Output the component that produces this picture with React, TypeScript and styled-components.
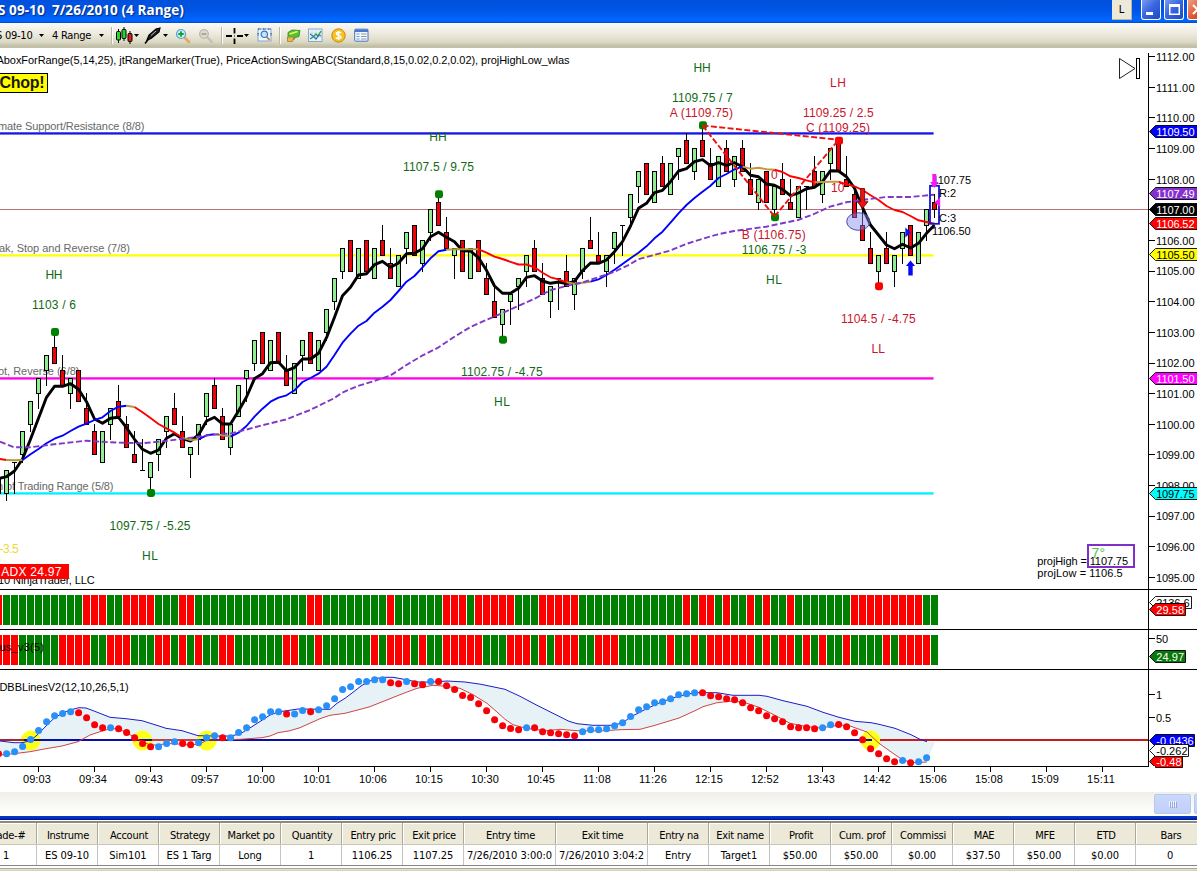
import React from 'react';
import styled, { createGlobalStyle } from 'styled-components';

const GlobalStyle = createGlobalStyle`
  html, body { margin: 0; padding: 0; background: #fff; overflow: hidden; }
  * { box-sizing: border-box; }
`;

const UI_FONT = '"DejaVu Sans Condensed", "Liberation Sans", sans-serif';
const CHART_FONT = '"Liberation Sans", Arial, sans-serif';

/* ---------- data ---------- */

type Kind = 'g' | 'r' | 'd';
type Candle = [number, number, number, number, Kind];

// high, low, body top, body bottom: quarter-point ticks above 1097.00
const candles: Candle[] = [
  [6, 3, 5, 3, 'r'], [6, 2, 6, 3, 'g'], [7, 3, 7, 7, 'd'], [11, 7, 11, 8, 'g'], [15, 11, 15, 12, 'g'],
  [18, 14, 18, 16, 'g'], [21, 17, 21, 19, 'g'], [24, 20, 22, 20, 'r'], [21, 17, 19, 17, 'r'], [18, 14, 18, 16, 'g'],
  [19, 15, 19, 15, 'r'], [16, 12, 14, 12, 'r'], [12, 8, 11, 8, 'r'], [11, 7, 11, 7, 'g'], [14, 10, 14, 12, 'g'],
  [17, 13, 15, 13, 'r'], [13, 9, 12, 9, 'r'], [11, 7, 8, 7, 'r'], [10, 6, 6, 6, 'd'], [7, 3, 7, 5, 'g'],
  [10, 6, 10, 8, 'g'], [13, 9, 13, 11, 'g'], [16, 12, 14, 12, 'r'], [13, 9, 11, 9, 'r'], [9, 5, 9, 8, 'g'],
  [12, 8, 12, 10, 'g'], [16, 12, 16, 13, 'g'], [18, 14, 17, 14, 'r'], [14, 10, 13, 10, 'r'], [12, 8, 12, 9, 'g'],
  [17, 13, 17, 13, 'g'], [19, 15, 19, 18, 'g'], [23, 19, 23, 20, 'g'], [24, 20, 24, 20, 'r'], [23, 19, 23, 19, 'g'],
  [24, 20, 24, 20, 'r'], [21, 17, 19, 17, 'r'], [20, 16, 20, 16, 'g'], [23, 19, 23, 21, 'g'], [24, 20, 24, 20, 'r'],
  [23, 19, 23, 19, 'g'], [27, 23, 27, 24, 'g'], [31, 27, 31, 28, 'g'], [35, 31, 35, 32, 'g'], [36, 32, 36, 32, 'r'],
  [35, 31, 35, 31, 'g'], [36, 32, 36, 32, 'r'], [35, 31, 35, 31, 'g'], [38, 34, 36, 34, 'r'], [35, 31, 33, 31, 'r'],
  [34, 30, 34, 30, 'g'], [37, 33, 37, 35, 'g'], [38, 34, 38, 34, 'r'], [36, 32, 36, 33, 'g'], [40, 36, 40, 37, 'g'],
  [42, 38, 41, 38, 'r'], [39, 35, 37, 35, 'r'], [35, 31, 35, 34, 'g'], [36, 32, 36, 32, 'r'], [35, 31, 35, 31, 'g'],
  [36, 32, 36, 32, 'r'], [33, 29, 31, 29, 'r'], [30, 26, 28, 26, 'r'], [27, 23, 27, 25, 'g'], [29, 25, 29, 28, 'g'],
  [31, 27, 31, 30, 'g'], [34, 30, 34, 32, 'g'], [36, 32, 35, 32, 'r'], [33, 29, 31, 29, 'r'], [30, 26, 30, 28, 'g'],
  [31, 27, 31, 31, 'd'], [34, 30, 32, 30, 'r'], [31, 27, 31, 29, 'g'], [35, 31, 35, 32, 'g'], [39, 35, 36, 35, 'r'],
  [37, 33, 34, 33, 'r'], [34, 30, 34, 32, 'g'], [37, 33, 37, 35, 'g'], [38, 34, 38, 38, 'd'], [42, 38, 42, 39, 'g'],
  [45, 41, 45, 43, 'g'], [46, 42, 46, 42, 'r'], [45, 41, 45, 41, 'g'], [47, 43, 46, 43, 'r'], [46, 42, 46, 42, 'g'],
  [48, 44, 48, 47, 'g'], [50, 46, 49, 46, 'r'], [48, 44, 48, 45, 'g'], [51, 47, 49, 47, 'r'], [48, 44, 46, 44, 'r'],
  [47, 43, 47, 43, 'g'], [49, 45, 48, 45, 'r'], [47, 43, 47, 44, 'g'], [49, 45, 48, 45, 'r'], [46, 42, 44, 42, 'r'],
  [44, 40, 44, 41, 'g'], [45, 41, 45, 41, 'r'], [43, 39, 43, 40, 'g'], [46, 42, 44, 42, 'r'], [44, 40, 41, 40, 'r'],
  [43, 39, 43, 39, 'g'], [43, 40, 43, 43, 'd'], [47, 43, 45, 43, 'r'], [45, 41, 45, 42, 'g'], [48, 44, 48, 46, 'g'],
  [49, 45, 49, 45, 'r'], [47, 43, 44, 43, 'r'], [43, 39, 42, 39, 'r'], [40, 36, 38, 36, 'r'], [37, 33, 35, 33, 'r'],
  [34, 30, 34, 32, 'g'], [37, 33, 35, 33, 'r'], [34, 30, 34, 32, 'g'], [37, 33, 37, 35, 'g'], [38, 34, 38, 34, 'r'],
  [37, 33, 37, 33, 'g'], [40, 36, 40, 38, 'g'], [42, 39, 41, 40, 'r'],
];

const fastAverage = [
  478.7, 476.7, 471, 459, 439.3, 418.3, 397.3, 386.3, 386.3, 383.7, 389.3, 401.7, 419, 423.3, 418.3, 417.3, 427.7,
  439.3, 449.3, 453.3, 450, 438.3, 433.7, 438.7, 441, 435, 421, 417.3, 424, 424, 411, 397, 378.6, 373.7, 362.7, 362.3,
  370.7, 367.6, 359, 359, 353.3, 337.7, 317.3, 295.7, 287.3, 275, 273.7, 264.7, 261.3, 267.3, 263, 253.7, 253.3, 248.7,
  236.7, 232.3, 237.3, 241.7, 250.7, 251, 257.7, 270.3, 286, 293.3, 293.3, 288.3, 277.3, 275.7, 281, 283.3, 282, 283.7,
  281.3, 270.7, 263, 263.3, 260, 251.7, 241.7, 226, 208.3, 203.3, 192.7, 190.3, 181.7, 171, 168.7, 161.7, 159.7, 165.7,
  162.7, 165.3, 162.7, 166.7, 175.3, 176.7, 184, 185.3, 189.3, 195.7, 193, 188.7, 187.3, 181.7, 170.7, 171, 176.7,
  188.3, 207.3, 225, 235, 245, 248.7, 244.3, 248, 243.3, 233.3, 225,
];

const slowAverage = [
  458.7, 460, 460.3, 460, 454.3, 449, 443.3, 438.7, 435.7, 431, 426.7, 423.7, 420, 417.3, 411, 406.7, 405.7, 407, 412.3,
  418, 424, 428.3, 432.7, 437.7, 440, 439.3, 435.3, 434.3, 435.3, 436.7, 432.7, 426, 416.7, 408.7, 401.7, 397.7, 395.3,
  390.3, 382, 378, 373.7, 366.7, 355, 342.7, 333.7, 325.7, 321, 312.7, 306.7, 300, 291, 281.7, 276, 267.3, 258.3, 251.3,
  249.7, 249.3, 249.3, 249.3, 249.3, 252.7, 256.7, 259, 261.8, 264.5, 264.5, 267.3, 272.7, 277.3, 279.3, 282.3, 283.7,
  282.7, 281.7, 279.3, 275, 269.7, 264, 258.3, 252.7, 246.3, 238.3, 231.7, 222.7, 213.3, 205, 198, 191.7, 185.7, 178,
  174, 169.3, 166.7, 168.7, 167.7, 169.3, 169.7, 172, 176.3, 178, 180.3, 182.3, 182, 181.7, 181.7, 184.3, 186.3, 190,
  195.3, 200, 206, 210, 212, 216, 220.3, 222, 223.7,
];

// first bar, last bar, colour of each trend section of the slow average
const slowSections: [number, number, string][] = [
  [-1, 0, '#f00'], [0, 2, '#b8963c'], [2, 15, '#00f'], [15, 16, '#b8963c'], [16, 22, '#f00'], [22, 24, '#b8963c'],
  [24, 26, '#00f'], [26, 28, '#b8963c'], [28, 55, '#00f'], [55, 59, '#b8963c'], [59, 70, '#f00'], [70, 73, '#b8963c'],
  [73, 92, '#00f'], [92, 96, '#c8953c'], [96, 101, '#f00'], [101, 104, '#c8953c'], [104, 116, '#f00'],
];

const longAverage =
  '0,441.7 14,447.3 30,447.3 54,444.3 86,440.7 110,442.3 142,443.3 166,441 198,436.7 222,433.7 230,433.7 246,429.7 ' +
  '262,425.3 286,419.5 310,410 334,398.3 342,392.7 358,386 374,381 390,375.7 406,365.3 422,355.7 438,347.7 454,337 ' +
  '470,327.3 486,320 502,313.3 518,306 534,299 550,290.3 566,286 582,282.7 598,277.3 614,272 630,264.3 638,259.3 ' +
  '654,255 670,250.7 686,244 702,239 718,234.3 734,231 766,226.7 798,220 814,214 830,206.7 846,202.3 862,200 886,197 ' +
  '910,197 934,194.7';

// lengths of alternating colour runs, the first one red
const trendRuns = [
  1, 10, 3, 2, 4, 3, 2, 14, 2, 8, 1, 6, 3, 1, 5, 3, 5, 13, 1, 1, 2, 1, 1, 2, 1, 1, 1, 2, 1, 7, 9, 2,
];
const focusRuns = [
  3, 5, 4, 2, 3, 3, 2, 1, 1, 1, 1, 2, 2, 6, 2, 2, 1, 6, 1, 1, 3, 1, 1, 2, 5, 3, 3, 1, 1, 1, 3, 2, 3, 6, 1, 2, 1, 1, 6,
  1, 1, 1, 2, 1, 1, 1, 1, 2, 1, 4, 1, 1, 4, 1,
];
const dotRuns = [
  1, 9, 4, 1, 5, 3, 2, 3, 1, 7, 1, 2, 1, 9, 2, 1, 2, 1, 11, 1, 6, 15, 15, 2, 8, 1, 1, 2,
];

const dotLevels = [
  753.7, 753.7, 751.7, 746.3, 739.3, 730.3, 721.7, 715.7, 713.3, 711.7, 712.7, 717.7, 724.7, 727.7, 727.7, 728.7, 732.3,
  737.7, 743.3, 746.7, 746.7, 743.3, 741.7, 743.3, 744.7, 742.7, 737.7, 735.7, 737.7, 737.7, 732.3, 727.7, 719.7, 716.7,
  711.7, 711.7, 714, 714, 710.3, 711.7, 709.7, 705.7, 698.7, 689.3, 686.7, 681.3, 681.3, 679.7, 679.7, 682.7, 683.7,
  681.3, 683.7, 684.7, 681.3, 681.3, 685.7, 689.3, 695.3, 697.3, 703.7, 710.7, 719.7, 725.7, 728.3, 729.7, 727.7, 727.7,
  731.7, 732.7, 733.7, 734.7, 735.7, 731.7, 729.7, 729.7, 728.7, 725.7, 722.7, 716.3, 709.7, 706.7, 702.7, 701.7, 698.7,
  694.7, 693.7, 692.7, 692.7, 695.7, 696.7, 698.7, 699.7, 702.7, 707.7, 710.7, 715.7, 718.7, 721.7, 726.7, 727.7, 727.7,
  728.7, 727.7, 724.7, 724.3, 726.7, 732.7, 739.7, 748.7, 753.7, 758.7, 761.7, 760.3, 762.7, 761.7, 757.7,
];

const upperBand =
  '0,741 14,742.7 22,742.7 30,741 38,734.3 46,726 54,718.3 62,713.3 70,710 79,707.7 86,708 94,711 110,717.3 126,718.7 ' +
  '142,720.7 158,725.7 166,728.3 182,730.7 198,735.7 214,736 230,736 240,734 253,726 270,715 278,712 298,709 330,709.3 ' +
  '337,703.3 345,698.3 353,692.3 361,686 369,681.3 377,678.3 385,677.3 393,677.3 401,678.7 417,682 433,682 447,681 ' +
  '465,682 481,684.3 505,689.3 520,696.3 537,705.3 553,713.3 569,721.3 577,723.7 593,725.3 613,725.3 623,722.7 ' +
  '630,717.3 646,709 662,701.7 678,696.3 695,692.7 717,692.7 733,695.3 759,695.3 767,696.3 783,700.7 807,706.3 ' +
  '823,712.3 839,717.3 855,721.3 871,722.7 879,724.3 895,728.3 911,734.7 920,739.3 927,741.7';

const lowerBand =
  '0,755 14,753.7 30,751.7 46,748.7 62,746 78,741.7 90,735 100,731.7 110,728.7 118,728.7 126,732.3 134,737 142,741.3 ' +
  '150,745 158,745 166,743.7 174,743.7 190,745 200,744 207,740 220,740 240,739.3 262,737.7 270,736 278,732.7 ' +
  '290,730.7 300,727.7 320,718.7 330,715.3 345,713.3 369,707 385,700.7 401,694.3 417,688.3 433,685.3 443,686 460,688.3 ' +
  '473,694.7 487,703.3 497,712 505,719.3 513,724.7 521,727 533,729.3 547,730.7 560,729.3 577,730.7 600,731 620,729.7 ' +
  '640,729.3 655,725.3 679,718 695,710.7 703,706.7 717,702.7 730,701.3 743,702 759,707.3 773,714.3 790,723.3 ' +
  '807,726.7 820,728 840,725 850,726 867,732 879,743.3 895,754.7 903,760 913,762.7 927,762';

const timeLabels = [
  '09:03', '09:34', '09:43', '09:57', '10:00', '10:01', '10:06', '10:15', '10:30', '10:45', '11:08', '11:26', '12:15',
  '12:52', '13:43', '14:42', '15:06', '15:08', '15:09', '15:11',
];

const columns: [string, string, number][] = [
  ['Trade-#', '1', 61], ['Instrume', 'ES 09-10', 61], ['Account', 'Sim101', 61], ['Strategy', 'ES 1 Targ', 61],
  ['Market po', 'Long', 61], ['Quantity', '1', 61], ['Entry pric', '1106.25', 61], ['Exit price', '1107.25', 61],
  ['Entry time', '7/26/2010 3:00:0', 92], ['Exit time', '7/26/2010 3:04:2', 92], ['Entry na', 'Entry', 61],
  ['Exit name', 'Target1', 61], ['Profit', '$50.00', 61], ['Cum. prof', '$50.00', 61], ['Commissi', '$0.00', 61],
  ['MAE', '$37.50', 61], ['MFE', '$50.00', 61], ['ETD', '$0.00', 61], ['Bars', '0', 69],
];

/* ---------- helpers ---------- */

const barX = (k: number) => 8 * k + 6.5;
const tickY = (t: number) => 516.15 - 7.6575 * t;
const priceY = (p: number) => 56.7 + (1112 - p) * 30.63;
const snap = (y: number) => Math.floor(y) + 0.5;
const section = (values: number[], from: number, to: number) =>
  values.slice(from + 1, to + 2).map((y, i) => `${barX(from + i)},${y}`).join(' ');
const isRed = (runs: number[]) => runs.flatMap((n, i) => Array<boolean>(n).fill(i % 2 === 0));

/* ---------- window frame ---------- */

const Window = styled.div`
  width: 1197px;
  height: 871px;
  overflow: hidden;
  display: flex;
  flex-direction: column;
  background: #fff;
`;

const TitleBar = styled.header`
  height: 23px;
  flex: none;
  display: flex;
  align-items: flex-start;
  justify-content: space-between;
  overflow: hidden;
  background: linear-gradient(#0050dc 0, #0055e5 45%, #0064fb 80%, #0066ff 92%, #0048c8 100%);
`;

const Title = styled.div`
  margin-left: -2px;
  font: bold 13.5px/20px "Open Sans", "Noto Sans", sans-serif;
  letter-spacing: 0.08px;
  white-space: pre;
  color: #fff;
  text-shadow: 1px 1px 1px #0a2a80;
`;

const Caption = styled.div`
  display: flex;
  flex: none;
  width: 85px;
`;

const LinkButton = styled.div`
  flex: none;
  width: 20px;
  height: 20px;
  margin-right: 9px;
  background: #ece9d8;
  border-right: 1px solid #b8b4a0;
  border-bottom: 1px solid #b8b4a0;
  font: 11px/20px ${UI_FONT};
  text-align: center;
`;

const CaptionButton = styled.div<{ $close?: boolean }>`
  flex: none;
  width: 20px;
  height: 20px;
  margin-right: 3px;
  border: 1px solid #fff;
  border-top: none;
  border-radius: 0 0 3px 3px;
  background: ${(p) =>
    p.$close ? 'linear-gradient(135deg, #f0a080, #e0502c 60%, #c83c18)' : 'linear-gradient(135deg, #7c9cf0, #3a68e0 45%, #1c48c8)'};
`;

const Toolbar = styled.nav`
  height: 25px;
  flex: none;
  display: flex;
  align-items: center;
  overflow: hidden;
  background: linear-gradient(#fbfaf6 0, #eeecdf 40%, #dcd9c6 75%, #c2bfa5 94%, #a9a78a 97%, #f4f3ea 100%);
  font: 11px/24px ${UI_FONT};
  color: #000;
`;

const ToolText = styled.span<{ $gap: number; $width: number }>`
  flex: none;
  margin-left: ${(p) => p.$gap}px;
  width: ${(p) => p.$width}px;
  letter-spacing: -0.25px;
  white-space: nowrap;
`;

const ToolIcon = styled.svg<{ $gap: number }>`
  flex: none;
  margin-left: ${(p) => p.$gap}px;
`;

const Caret = styled.span<{ $gap: number }>`
  flex: none;
  margin-left: ${(p) => p.$gap}px;
  width: 5px;
  height: 3px;
  background: #000;
  clip-path: polygon(0 0, 100% 0, 50% 100%);
`;

const Divider = styled.span<{ $gap: number }>`
  flex: none;
  margin-left: ${(p) => p.$gap}px;
  width: 2px;
  height: 17px;
  border-left: 1px solid #b9b6a4;
  border-right: 1px solid #fff;
`;

/* ---------- chart ---------- */

const ChartArea = styled.main`
  flex: none;
  height: 744px;
  display: flex;
  flex-direction: column;
`;

const PanelRow = styled.section<{ $height: number }>`
  flex: none;
  height: ${(p) => p.$height}px;
  display: flex;
  overflow: hidden;
`;

const Plot = styled.svg`
  flex: none;
  display: block;
`;

const ChartText = styled.text<{ $size?: number }>`
  font-family: ${CHART_FONT};
  font-size: ${(p) => p.$size ?? 11}px;
`;

type LabelProps = {
  x1: number; x2: number; y: number; fill?: string; size?: number; bold?: boolean; children: string;
};

function Label({ x1, x2, y, fill = '#000', size, bold, children }: LabelProps) {
  return (
    <ChartText x={x1} y={y} fill={fill} $size={size} fontWeight={bold ? 700 : 400} textLength={x2 - x1}>
      {children}
    </ChartText>
  );
}

const UP = '#106a14';
const DOWN = '#c8142c';

function Candles() {
  return (
    <g>
      {candles.map(([hi, lo, top, bottom, kind], i) => {
        const x = barX(i - 1) - 2.5;
        const yHigh = Math.floor(tickY(hi));
        const yLow = Math.floor(tickY(lo));
        const yTop = Math.floor(tickY(top));
        const height = Math.floor(tickY(bottom)) - yTop + 1;
        return (
          <g key={i}>
            <rect x={x + 2} y={yHigh} width={1} height={yLow - yHigh + 1} />
            <rect x={x} y={yTop} width={5} height={height} />
            {kind !== 'd' && (
              <rect x={x + 1} y={yTop + 1} width={3} height={height - 2} fill={kind === 'g' ? '#90ee90' : '#f4000a'} />
            )}
          </g>
        );
      })}
    </g>
  );
}

const levels: [number, string][] = [
  [1109.5, '#1414f0'], [1105.5, '#ffff00'], [1101.5, '#ff00e8'], [1097.75, '#00f0ff'],
];

const swings: [number, number, string][] = [
  [6, 24, 'green'], [18, 3, 'green'], [54, 42, 'green'], [62, 23, 'green'], [87, 51, 'green'], [96, 39, 'green'],
  [104, 49, '#f00'], [109, 30, '#f00'],
];

function PricePlot() {
  return (
    <Plot width={1148} height={542} viewBox="0 48 1148 542">
      <Label x1={-3.5} x2={569.5} y={64.3}>
        AboxForRange(5,14,25), jtRangeMarker(True), PriceActionSwingABC(Standard,8,15,0.02,0.2,0.02), projHighLow_wlas
      </Label>
      {levels.map(([p, color]) => (
        <g key={p}>
          <rect x={0} y={Math.floor(priceY(p)) - 1} width={933.5} height={3} fill={color} opacity={0.3} />
          <rect x={0} y={Math.floor(priceY(p)) - 0.6} width={933.5} height={2} fill={color} />
        </g>
      ))}
      <rect x={0} y={209} width={1148} height={1} fill="#b87070" />

      <Label x1={-2} x2={144.5} y={130} fill="#686868">mate Support/Resistance (8/8)</Label>
      <Label x1={-1} x2={130} y={252} fill="#686868">ak, Stop and Reverse (7/8)</Label>
      <Label x1={-2} x2={79.5} y={375} fill="#686868">ot, Reverse (6/8)</Label>
      <Label x1={-6} x2={113.5} y={490} fill="#686868">m of Trading Range (5/8)</Label>

      <Candles />

      <g fill="none" strokeLinejoin="round">
        <polyline points={section(fastAverage, -1, 116)} stroke="#000" strokeWidth={2.9} />
        {slowSections.map(([from, to, color]) => (
          <polyline key={from} points={section(slowAverage, from, to)} stroke={color} strokeWidth={1.9} />
        ))}
        <polyline points={longAverage} stroke="#8038c8" strokeWidth={1.9} strokeDasharray="6 2.6" />
      </g>

      {swings.map(([k, t, color]) => (
        <rect key={k} x={barX(k) - 3.5} y={tickY(t) - 4.3} width={8} height={8} rx={2.4} fill={color} />
      ))}
      <g stroke="#ee1010" strokeWidth={1.9} strokeDasharray="6 2.4" fill="none">
        <path d="M702.5 125.5L838.5 139.8" />
        <path d="M702.5 125.5L774.5 216.5" />
        <path d="M774.5 216.5L838.5 140" />
      </g>

      <ellipse cx={858.3} cy={221.5} rx={11.6} ry={8.8} fill="#8888f0" fillOpacity={0.45} stroke="#4848a8" />
      <path d="M860.6 188.5h4v13.2h3.4l-5.4 6.6l-5.4 -6.6h3.4z" fill="#f01010" stroke="#600" strokeWidth={0.8} />
      <path d="M905.3 227.5l5.6 5l-5.6 5z" fill="#1010f8" />
      <path d="M910.5 260.5l4.6 5.6h-2.4v9.4h-4.4v-9.4h-2.4z" fill="#0808f8" />
      <rect x={930} y={185.8} width={9} height={38} fill="none" stroke="#1414d8" strokeWidth={1.8} />
      <Label x1={932.5} x2={971} y={184}>1107.75</Label>
      <path d="M932.3 174h4v8h2.2l-4.2 6l-4.2 -6h2.2z" fill="#f818f0" />
      <path d="M934.6 202.2l5.6 -5v10z" fill="#f818f0" />

      <g>
        <Label x1={45.5} x2={62.5} y={279} size={12} fill={UP}>HH</Label>
        <Label x1={32} x2={76} y={309} size={12} fill={UP}>1103 / 6</Label>
        <Label x1={109.5} x2={190.5} y={530} size={12} fill={UP}>1097.75 / -5.25</Label>
        <Label x1={142} x2={158} y={560} size={12} fill={UP}>HL</Label>
        <Label x1={429.3} x2={446.7} y={141} size={12} fill={UP}>HH</Label>
        <Label x1={403} x2={474} y={171} size={12} fill={UP}>1107.5 / 9.75</Label>
        <Label x1={461} x2={542.6} y={375.7} size={12} fill={UP}>1102.75 / -4.75</Label>
        <Label x1={494} x2={510} y={406} size={12} fill={UP}>HL</Label>
        <Label x1={693.4} x2={710.6} y={72} size={12} fill={UP}>HH</Label>
        <Label x1={672} x2={732.6} y={102} size={12} fill={UP}>1109.75 / 7</Label>
        <Label x1={669.7} x2={733} y={117} size={12} fill={DOWN}>A (1109.75)</Label>
        <Label x1={830} x2={846} y={87} size={12} fill={DOWN}>LH</Label>
        <Label x1={803} x2={873.6} y={117} size={12} fill={DOWN}>1109.25 / 2.5</Label>
        <Label x1={806} x2={870} y={132} size={12} fill={DOWN}>C (1109.25)</Label>
        <Label x1={771} x2={777.7} y={179} size={12} fill={DOWN}>0</Label>
        <Label x1={831} x2={844.5} y={191.5} size={12} fill={DOWN}>10</Label>
        <Label x1={741.7} x2={805.7} y={239} size={12} fill={DOWN}>B (1106.75)</Label>
        <Label x1={741.7} x2={806.5} y={254} size={12} fill={UP}>1106.75 / -3</Label>
        <Label x1={766} x2={782} y={284} size={12} fill={UP}>HL</Label>
        <Label x1={841} x2={915.7} y={323} size={12} fill={DOWN}>1104.5 / -4.75</Label>
        <Label x1={871.6} x2={885} y={353} size={12} fill={DOWN}>LL</Label>
      </g>

      <Label x1={939} x2={956} y={197}>R:2</Label>
      <Label x1={939} x2={956} y={222}>C:3</Label>
      <Label x1={932} x2={970.6} y={235}>1106.50</Label>

      <rect x={-2} y={73.5} width={49.5} height={19} fill="#ffff00" stroke="#000" />
      <Label x1={-0.5} x2={44.5} y={88} size={16} bold fill="#1c1800">Chop!</Label>

      <Label x1={-0.5} x2={18.8} y={553} size={12} fill="#ecd83c">-3.5</Label>
      <Label x1={-2} x2={94.8} y={584}>10 NinjaTrader, LLC</Label>
      <rect x={0} y={564} width={69} height={15} fill="#ff0000" />
      <Label x1={1.2} x2={61.5} y={575.7} size={12} fill="#fff">ADX 24.97</Label>

      <Label x1={1091.5} x2={1105} y={558} size={14} fill="#50c050">7°</Label>
      <Label x1={1037.3} x2={1128} y={565}>projHigh = 1107.75</Label>
      <Label x1={1037.3} x2={1122.7} y={577}>projLow = 1106.5</Label>
      <rect x={1088} y={545} width={46} height={22} fill="none" stroke="#8030c8" strokeWidth={2} />

      <path d="M1119.5 58.5L1135 68.5L1119.5 78.5z" fill="none" stroke="#222" />
      <rect x={1136.5} y={58.5} width={3} height={20} fill="#fff" stroke="#000" />
      <rect x={0} y={589} width={1148} height={1} fill="#000" />
    </Plot>
  );
}

type TagProps = { y: number; right: number; fill: string; color?: string; textRight?: number; children: string };

function Tag({ y, right, fill, color = '#fff', textRight = 1194.5, children }: TagProps) {
  const m = snap(y);
  return (
    <g>
      <path d={`M1149.5 ${m}L1155.5 ${m - 6}H${right}V${m + 6}H1155.5z`} fill={fill} stroke="#000" strokeWidth={0.9} />
      <Label x1={1156.2} x2={textRight} y={m + 4.3} fill={color}>{children}</Label>
    </g>
  );
}

function Tick({ y, right, children }: { y: number; right: number; children: string }) {
  return (
    <g>
      <rect x={1148} y={Math.floor(y)} width={7} height={1} fill="#000" />
      <Label x1={1156} x2={right} y={y + 4.3}>{children}</Label>
    </g>
  );
}

function PriceScale() {
  const prices = Array.from({ length: 18 }, (_, i) => 1112 - i);
  return (
    <Plot width={49} height={542} viewBox="1148 48 49 542">
      <rect x={1148} y={53} width={1} height={537} fill="#000" />
      {prices.map((p) => (
        <Tick key={p} y={priceY(p)} right={1194.5}>{p.toFixed(2)}</Tick>
      ))}
      <Tag y={131.7} right={1200} fill="#0000ff">1109.50</Tag>
      <Tag y={193.7} right={1200} fill="#8430d0">1107.49</Tag>
      <Tag y={209.2} right={1200} fill="#000">1107.00</Tag>
      <Tag y={223.7} right={1200} fill="#ff0000">1106.52</Tag>
      <Tag y={254.7} right={1200} fill="#ffff00" color="#000">1105.50</Tag>
      <Tag y={378} right={1200} fill="#ff00ff">1101.50</Tag>
      <Tag y={493} right={1200} fill="#00ffff" color="#000">1097.75</Tag>
      <rect x={1148} y={589} width={49} height={1} fill="#000" />
    </Plot>
  );
}

function StripPlot({ top, runs, caption }: { top: number; runs: number[]; caption?: string }) {
  return (
    <Plot width={1148} height={40} viewBox={`0 ${top} 1148 40`}>
      {isRed(runs).map((red, i) => (
        <rect key={i} x={8 * (i - 1) + 3} y={top + 5} width={7} height={30} fill={red ? '#ff0000' : '#008000'} />
      ))}
      {caption && <Label x1={-0.5} x2={44} y={top + 21}>{caption}</Label>}
      <rect x={0} y={top + 39} width={1148} height={1} fill="#000" />
    </Plot>
  );
}

function MacdPlot() {
  const reds = isRed(dotRuns);
  return (
    <Plot width={1148} height={96} viewBox="0 670 1148 96">
      <polygon points={`${upperBand} 935,742 ${lowerBand.split(' ').reverse().join(' ')}`} fill="#e6f2f6" />
      {[30.7, 142.5, 206.7, 870.5].map((x) => (
        <circle key={x} cx={x} cy={740.5} r={10} fill="#ffff1c" />
      ))}
      <rect x={0} y={739} width={872} height={2} fill="#0c0ca8" />
      <rect x={0} y={739} width={24} height={2} fill="#a02838" />
      <rect x={152} y={739} width={46} height={2} fill="#c84040" />
      <rect x={880} y={739} width={268} height={2} fill="#c81c1c" />
      <polyline points={upperBand} fill="none" stroke="#1c1ccc" strokeWidth={1} />
      <polyline points={lowerBand} fill="none" stroke="#d04444" strokeWidth={1} />
      {dotLevels.map((y, i) => (
        <circle key={i} cx={barX(i - 1) + 0.1} cy={y + 0.1} r={3.5} fill={reds[i] ? '#f80008' : '#2890f8'} />
      ))}
      <Label x1={-0.5} x2={128.7} y={691}>DBBLinesV2(12,10,26,5,1)</Label>
    </Plot>
  );
}

function TimeAxis() {
  return (
    <Plot width={1148} height={26} viewBox="0 766 1148 26">
      <rect x={0} y={766} width={1149} height={1} fill="#000" />
      {timeLabels.map((t, i) => (
        <g key={t}>
          <rect x={38 + 56 * i} y={766} width={1} height={6} fill="#000" />
          <Label x1={23 + 56 * i} x2={50.8 + 56 * i} y={783.3}>{t}</Label>
        </g>
      ))}
    </Plot>
  );
}

/* ---------- scroll bar and grid ---------- */

const ScrollTrack = styled.div`
  flex: none;
  height: 24px;
  padding: 2px 0 2px 1154px;
  display: flex;
  gap: 3px;
  overflow: hidden;
  background: linear-gradient(#f1efea, #fdfdfa 80%);
`;

const ScrollThumb = styled.div`
  flex: none;
  width: 37px;
  height: 20px;
  display: flex;
  align-items: center;
  justify-content: center;
  gap: 1px;
  border: 1px solid #b4c8f4;
  border-radius: 2px;
  background: linear-gradient(#ccd8fc, #c0d0f8);
`;

const Grip = styled.span`
  width: 1px;
  height: 6px;
  background: #eef4fe;
  box-shadow: 1px 1px 0 #94a8dc;
`;

const BlueEdge = styled.div`
  flex: none;
  height: 4px;
  background: linear-gradient(#0038d8, #0830c0 50%, #001080);
`;

const Grid = styled.div`
  flex: none;
  height: 51px;
  border-top: 1px solid #fff;
  background: #fff;
`;

const GridRow = styled.div<{ $header?: boolean }>`
  display: flex;
  width: 1221px;
  margin-left: -24px;
  height: ${(p) => (p.$header ? 24 : 21)}px;
  background: ${(p) => (p.$header ? '#ece9d8' : '#fff')};
  border-top: ${(p) => (p.$header ? '2px solid #8c8a80' : 'none')};
  border-bottom: ${(p) => (p.$header ? '1px solid #c8c5b2' : '1px solid #848484')};
`;

const Cell = styled.div<{ $width: number; $header?: boolean }>`
  flex: none;
  width: ${(p) => p.$width}px;
  border-right: 1px solid ${(p) => (p.$header ? '#aca899' : '#c4c4c4')};
  box-shadow: ${(p) => (p.$header ? 'inset 1px 1px 0 #fff' : 'none')};
  padding-left: ${(p) => (p.$header ? 2 : 0)}px;
  font: 11px/${(p) => (p.$header ? 25 : 21)}px ${UI_FONT};
  letter-spacing: ${(p) => (p.$header ? -0.28 : -0.05)}px;
  text-align: center;
  white-space: nowrap;
  overflow: hidden;
`;

const GridFooter = styled.div`
  height: 5px;
  border-bottom: 1px solid #d4d0bc;
  background: linear-gradient(#fff 0 60%, #aca899 60% 85%, #e4e0d0 85%);
`;

export default function App() {
  return (
    <Window>
      <GlobalStyle />
      <TitleBar>
        <Title>{'S 09-10  7/26/2010 (4 Range)'}</Title>
        <Caption>
          <LinkButton>L</LinkButton>
          <CaptionButton>
            <svg width="18" height="18" viewBox="0 0 18 18"><rect x="4" y="12" width="7" height="3" fill="#fff" /></svg>
          </CaptionButton>
          <CaptionButton>
            <svg width="18" height="18" viewBox="0 0 18 18">
              <path d="M4 4h11v11H4z M5.5 7h8v6.500h-8z" fill="#fff" fillRule="evenodd" />
            </svg>
          </CaptionButton>
          <CaptionButton $close>
            <svg width="18" height="18" viewBox="0 0 18 18">
              <path d="M5 5l9 9M14 5l-9 9" stroke="#fff" strokeWidth="2.2" />
            </svg>
          </CaptionButton>
        </Caption>
      </TitleBar>

      <Toolbar>
        <ToolText $gap={-4} $width={37}>S 09-10</ToolText>
        <Caret $gap={6} />
        <ToolText $gap={8} $width={41}>4 Range</ToolText>
        <Caret $gap={6} />
        <Divider $gap={7} />
        <ToolIcon $gap={2} width="18" height="18" viewBox="0 0 18 18">
          <path d="M3.500 2v14M9 0v14M15 4v13" stroke="#000" />
          <rect x="1.500" y="4.500" width="4" height="8.500" rx="1" fill="#28d828" stroke="#000" />
          <rect x="7" y="2.500" width="4" height="9" rx="1" fill="#28d828" stroke="#000" />
          <rect x="13" y="6.500" width="4" height="8" rx="1" fill="#d82020" stroke="#000" />
        </ToolIcon>
        <Caret $gap={1} />
        <ToolIcon $gap={5} width="18" height="18" viewBox="0 0 18 18">
          <path d="M3 13l2-5L12 2l4-1-1 4-8 6.500z" fill="#222" stroke="#000" strokeWidth="1.200" />
          <path d="M7 8.500l5-4.500" stroke="#bbb" />
          <path d="M1 16.500l4-5" stroke="#000" strokeWidth="1.500" />
        </ToolIcon>
        <Caret $gap={1} />
        <ToolIcon $gap={7} width="16" height="16" viewBox="0 0 16 16">
          <path d="M9.500 9.500l4.500 4.500" stroke="#e8a860" strokeWidth="2.800" strokeLinecap="round" />
          <circle cx="6" cy="6" r="4.500" fill="#c8f0f0" stroke="#58a0d8" strokeWidth="1.200" />
          <path d="M6 3.300v5.400M3.300 6h5.400" stroke="#18a030" strokeWidth="1.800" />
        </ToolIcon>
        <ToolIcon $gap={7} width="16" height="16" viewBox="0 0 16 16">
          <path d="M9.500 9.500l4.500 4.500" stroke="#c4c1b6" strokeWidth="2.400" strokeLinecap="round" />
          <circle cx="6" cy="6" r="4.300" fill="#dcdad0" stroke="#bab8ac" strokeWidth="1.300" />
          <path d="M3.700 6h4.600" stroke="#98968c" strokeWidth="1.500" />
        </ToolIcon>
        <Divider $gap={7} />
        <ToolIcon $gap={3} width="17" height="16" viewBox="0 0 17 16">
          <path d="M0 8h6M11 8h6M8.500 0v5.500M8.500 10.500V16" stroke="#000" strokeWidth="1.800" />
          <rect x="8" y="7.500" width="1" height="1" />
        </ToolIcon>
        <Caret $gap={1} />
        <ToolIcon $gap={8} width="15" height="15" viewBox="0 0 15 15">
          <rect x="1" y="1" width="13" height="12" fill="#eef4fc" stroke="#88a8d0" />
          <path d="M1 1h3M6 1h3M11 1h3M1 5v3M14 5v3" stroke="#3c70b0" strokeWidth="1.500" strokeDasharray="1.500 1" />
          <circle cx="7.300" cy="6.300" r="3.200" fill="#c4e4fc" stroke="#3878c0" strokeWidth="1.200" />
          <path d="M9.600 8.800l3 3" stroke="#c08040" strokeWidth="1.800" />
        </ToolIcon>
        <Divider $gap={7} />
        <ToolIcon $gap={5} width="15" height="15" viewBox="0 0 15 15">
          <path d="M2 4.500l4-2.500 8 .5-1 6-4 1-1 2-6-1z" fill="#58c038" stroke="#308820" strokeWidth="0.800" />
          <path d="M3.500 6l8-2.500" stroke="#e8f860" strokeWidth="1.400" />
          <path d="M1.500 9h6.500l-1.500 4.500H1.500z" fill="#e8b850" stroke="#b07820" strokeWidth="0.800" />
        </ToolIcon>
        <ToolIcon $gap={7} width="15" height="15" viewBox="0 0 15 15">
          <rect x="0.500" y="1" width="13.500" height="12.500" fill="#eaf2fa" stroke="#88a8cc" />
          <path d="M4 1v12M8 1v12M1 5h13M1 9h13" stroke="#c0d4e8" strokeWidth="0.600" />
          <path d="M2 11l3-2 3-3 2 2 3-5" stroke="#30a048" fill="none" strokeWidth="1.400" />
          <path d="M2 6l3 2 3 3 3-4 2 1" stroke="#3870b8" fill="none" strokeWidth="1.200" />
        </ToolIcon>
        <ToolIcon $gap={8} width="15" height="15" viewBox="0 0 15 15">
          <circle cx="7.500" cy="7.500" r="6.700" fill="#f8c020" stroke="#c88810" />
          <path d="M10 5c-.6-1-4.600-1.300-4.600.7 0 2 4.600 1.300 4.600 3.400 0 1.900-4.200 1.700-5 .4M7.500 3v9" stroke="#fff" strokeWidth="1.500" fill="none" />
        </ToolIcon>
        <ToolIcon $gap={8} width="15" height="15" viewBox="0 0 15 15">
          <rect x="0.700" y="1.200" width="13.300" height="12" rx="1" fill="#f4f8fe" stroke="#4870b8" />
          <rect x="1" y="1.500" width="13" height="2.500" fill="#4878d0" />
          <path d="M2.500 6h3M2.500 8.500h3M2.500 11h3" stroke="#58a0e0" strokeWidth="1.200" />
          <path d="M7 6h5.500M7 8.500h5.500M7 11h5.500" stroke="#8898b0" />
        </ToolIcon>
      </Toolbar>

      <ChartArea>
        <PanelRow $height={542}>
          <PricePlot />
          <PriceScale />
        </PanelRow>
        <PanelRow $height={40}>
          <StripPlot top={590} runs={trendRuns} />
          <Plot width={49} height={40} viewBox="1148 590 49 40">
            <rect x={1148} y={590} width={1} height={40} />
            <Tag y={602} right={1191.5} fill="#fff" color="#000" textRight={1189.5}>2136.6</Tag>
            <Tag y={609.5} right={1185.5} fill="#ff0000" textRight={1184}>29.58</Tag>
            <rect x={1148} y={629} width={49} height={1} />
          </Plot>
        </PanelRow>
        <PanelRow $height={40}>
          <StripPlot top={630} runs={focusRuns} caption="us_v3(5)" />
          <Plot width={49} height={40} viewBox="1148 630 49 40">
            <rect x={1148} y={630} width={1} height={40} />
            <Tick y={638.7} right={1168}>50</Tick>
            <Tag y={656.7} right={1185.5} fill="#087808" textRight={1184}>24.97</Tag>
            <rect x={1148} y={669} width={49} height={1} />
          </Plot>
        </PanelRow>
        <PanelRow $height={96}>
          <MacdPlot />
          <Plot width={49} height={96} viewBox="1148 670 49 96">
            <rect x={1148} y={670} width={1} height={96} />
            <Tick y={694.3} right={1161.5}>1</Tick>
            <Tick y={717.2} right={1171}>0.5</Tick>
            <Tag y={740.3} right={1194.5} fill="#0000ff" textRight={1193.7}>-0.0436</Tag>
            <Tag y={761.3} right={1182.5} fill="#ff0000" textRight={1181.5}>-0.48</Tag>
            <Tag y={750.7} right={1188.5} fill="#fff" color="#000" textRight={1187.5}>-0.262</Tag>
          </Plot>
        </PanelRow>
        <PanelRow $height={26}>
          <TimeAxis />
          <Plot width={49} height={26} viewBox="1148 766 49 26">
            <rect x={1148} y={766} width={1} height={1} />
            <path d="M1155.500 766V767.500H1182.500V766" fill="#f00" stroke="#000" strokeWidth={0.9} />
          </Plot>
        </PanelRow>
      </ChartArea>

      <ScrollTrack>
        <ScrollThumb>
          <Grip /><Grip /><Grip /><Grip />
        </ScrollThumb>
        <ScrollThumb />
      </ScrollTrack>
      <BlueEdge />
      <Grid>
        <GridRow $header>
          {columns.map(([head, , w]) => (
            <Cell key={head} $width={w} $header>{head}</Cell>
          ))}
        </GridRow>
        <GridRow>
          {columns.map(([head, value, w]) => (
            <Cell key={head} $width={w}>{value}</Cell>
          ))}
        </GridRow>
        <GridFooter />
      </Grid>
    </Window>
  );
}
